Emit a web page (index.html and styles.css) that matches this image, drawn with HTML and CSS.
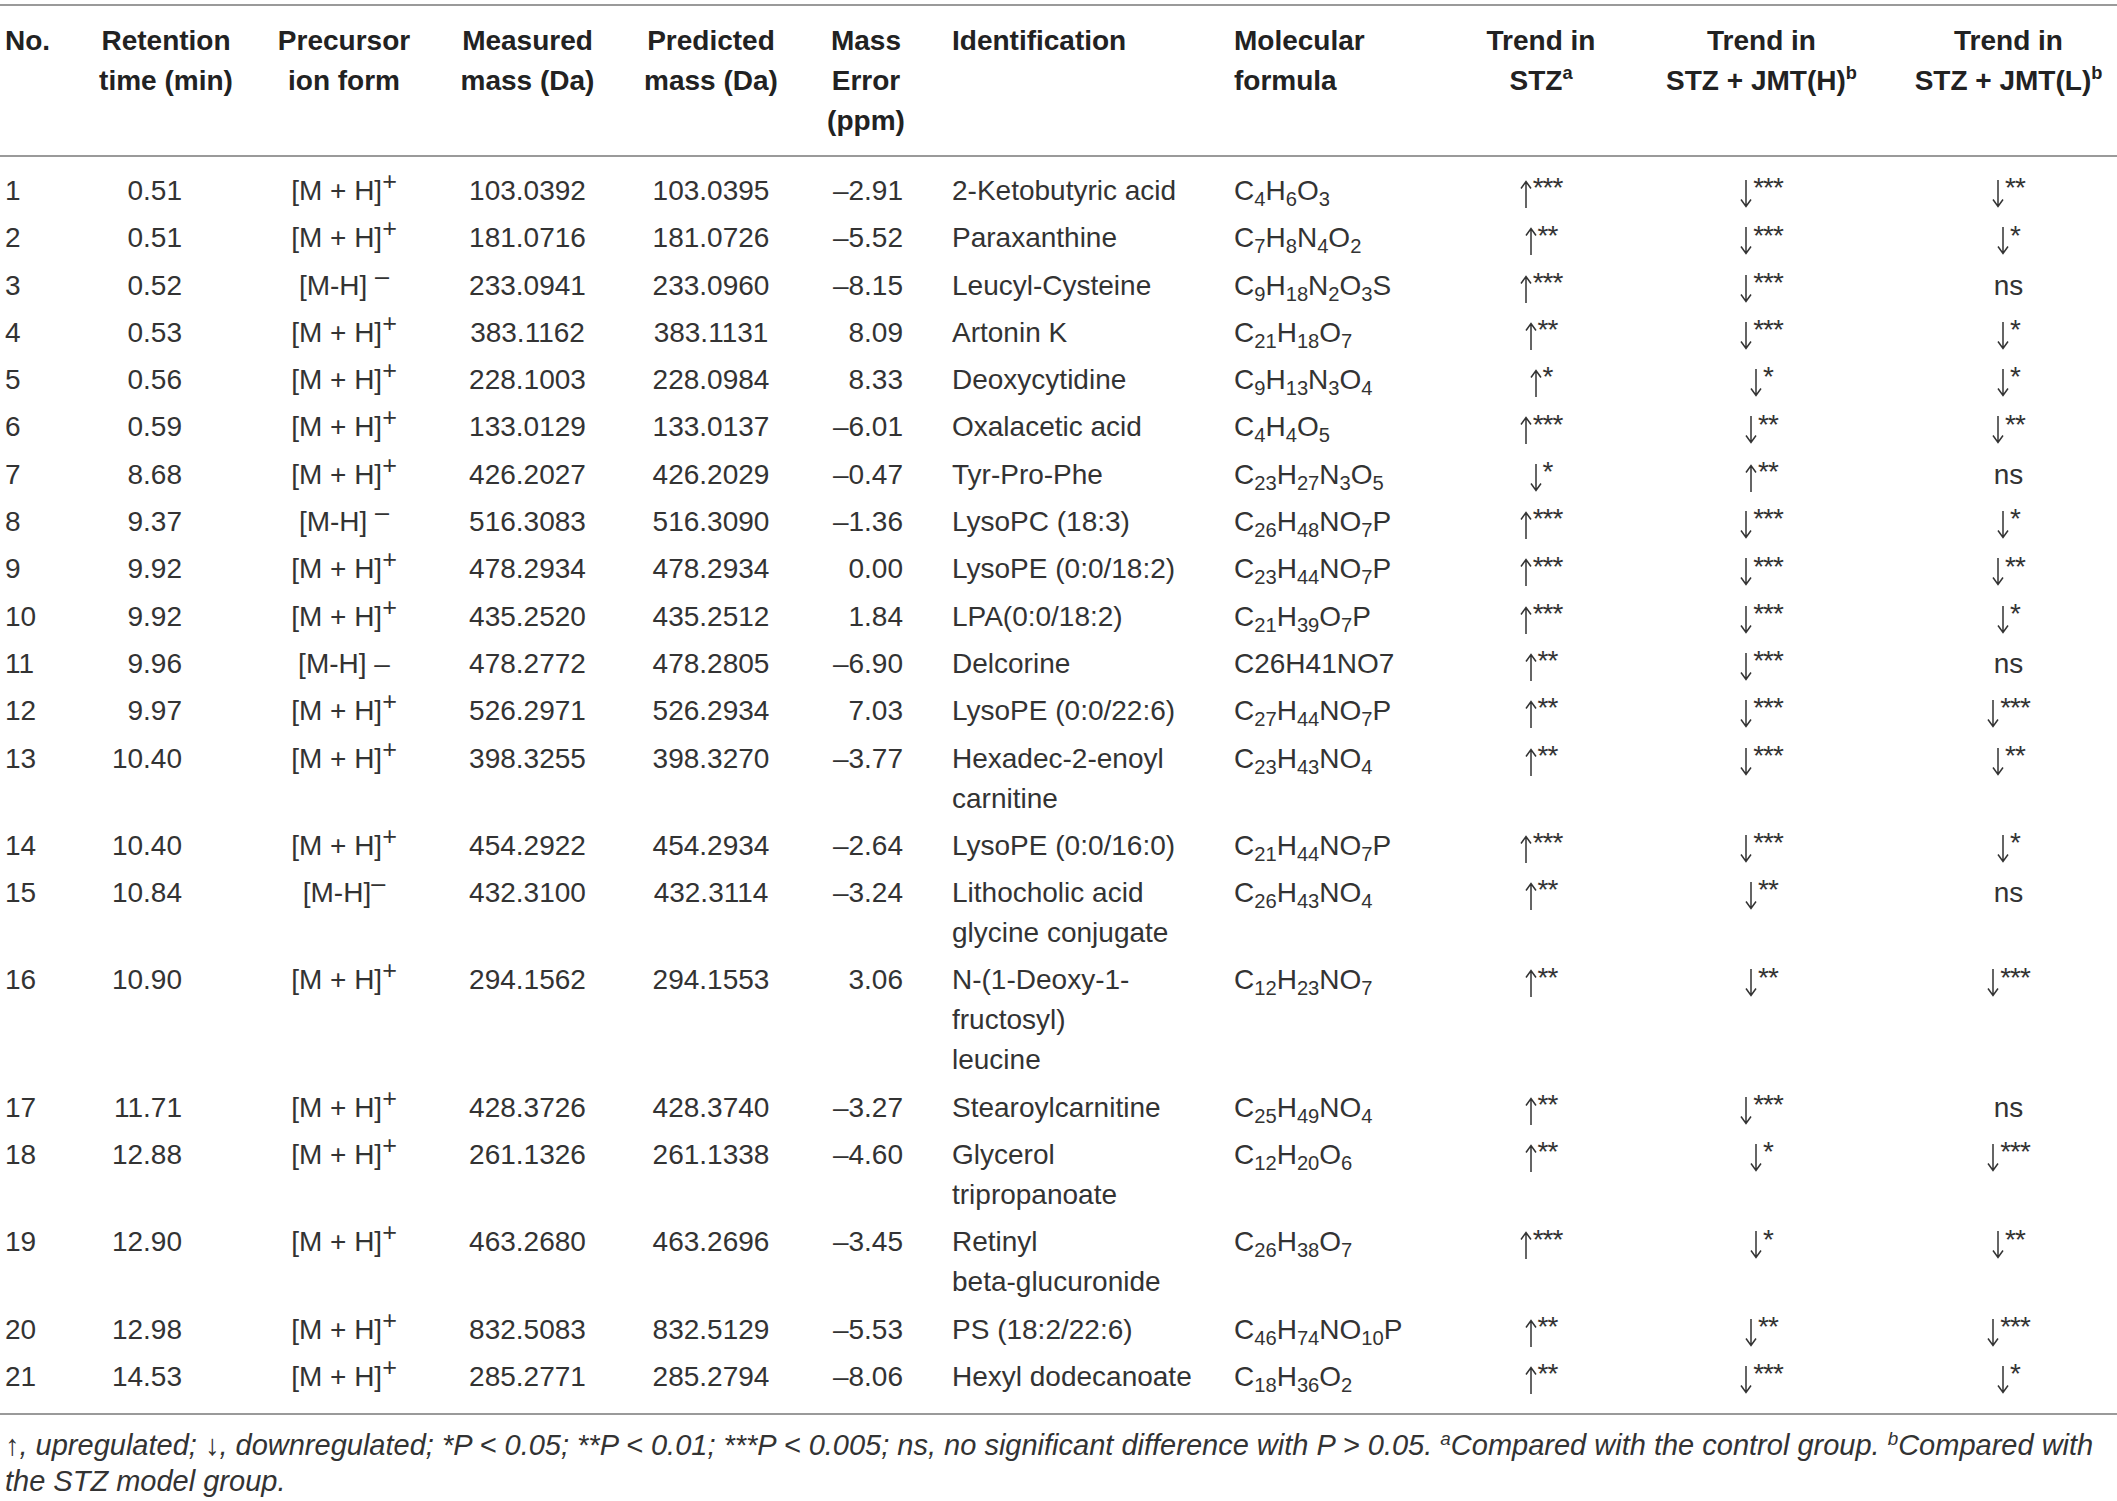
FILE: index.html
```html
<!DOCTYPE html>
<html lang="en">
<head>
    <meta charset="UTF-8">
    <title>Table - Identified metabolites</title>
    <link rel="stylesheet" href="styles.css">
</head>
<body>
<!-- flechas reutilizables -->
<svg class="defs" width="0" height="0" aria-hidden="true">
    <symbol id="up" viewBox="0 0 12 28"><path d="M6 1.5V28M1 8.5L6 1.5L11 8.5" fill="none" stroke="#333" stroke-width="1.5"/></symbol>
    <symbol id="dn" viewBox="0 0 12 28"><path d="M6 0V26.5M1 19.5L6 26.5L11 19.5" fill="none" stroke="#333" stroke-width="1.5"/></symbol>
</svg>
<div class="wrap">
    <table class="metab">
        <colgroup>
            <col style="width:80px"><col style="width:172px"><col style="width:184px"><col style="width:183px">
            <col style="width:184px"><col style="width:126px"><col style="width:281px"><col style="width:235px">
            <col style="width:182px"><col style="width:259px"><col style="width:231px">
        </colgroup>
        <thead>
            <tr>
                <th>No.</th>
                <th>Retention<br>time (min)</th>
                <th>Precursor<br>ion form</th>
                <th>Measured<br>mass (Da)</th>
                <th>Predicted<br>mass (Da)</th>
                <th>Mass<br>Error<br>(ppm)</th>
                <th>Identification</th>
                <th>Molecular<br>formula</th>
                <th>Trend in<br>STZ<sup class="fn">a</sup></th>
                <th>Trend in<br>STZ + JMT(H)<sup class="fn">b</sup></th>
                <th>Trend in<br>STZ + JMT(L)<sup class="fn">b</sup></th>
            </tr>
        </thead>
        <tbody>
            <tr><td>1</td><td>0.51</td><td>[M + H]<sup class="ch">+</sup></td><td>103.0392</td><td>103.0395</td><td>–2.91</td><td>2-Ketobutyric acid</td><td>C<sub>4</sub>H<sub>6</sub>O<sub>3</sub></td><td><svg class="arr"><use href="#up"/></svg><sup class="st">***</sup></td><td><svg class="arr"><use href="#dn"/></svg><sup class="st">***</sup></td><td><svg class="arr"><use href="#dn"/></svg><sup class="st">**</sup></td></tr>
            <tr><td>2</td><td>0.51</td><td>[M + H]<sup class="ch">+</sup></td><td>181.0716</td><td>181.0726</td><td>–5.52</td><td>Paraxanthine</td><td>C<sub>7</sub>H<sub>8</sub>N<sub>4</sub>O<sub>2</sub></td><td><svg class="arr"><use href="#up"/></svg><sup class="st">**</sup></td><td><svg class="arr"><use href="#dn"/></svg><sup class="st">***</sup></td><td><svg class="arr"><use href="#dn"/></svg><sup class="st">*</sup></td></tr>
            <tr><td>3</td><td>0.52</td><td>[M-H] <sup class="ch">–</sup></td><td>233.0941</td><td>233.0960</td><td>–8.15</td><td>Leucyl-Cysteine</td><td>C<sub>9</sub>H<sub>18</sub>N<sub>2</sub>O<sub>3</sub>S</td><td><svg class="arr"><use href="#up"/></svg><sup class="st">***</sup></td><td><svg class="arr"><use href="#dn"/></svg><sup class="st">***</sup></td><td>ns</td></tr>
            <tr><td>4</td><td>0.53</td><td>[M + H]<sup class="ch">+</sup></td><td>383.1162</td><td>383.1131</td><td>8.09</td><td>Artonin K</td><td>C<sub>21</sub>H<sub>18</sub>O<sub>7</sub></td><td><svg class="arr"><use href="#up"/></svg><sup class="st">**</sup></td><td><svg class="arr"><use href="#dn"/></svg><sup class="st">***</sup></td><td><svg class="arr"><use href="#dn"/></svg><sup class="st">*</sup></td></tr>
            <tr><td>5</td><td>0.56</td><td>[M + H]<sup class="ch">+</sup></td><td>228.1003</td><td>228.0984</td><td>8.33</td><td>Deoxycytidine</td><td>C<sub>9</sub>H<sub>13</sub>N<sub>3</sub>O<sub>4</sub></td><td><svg class="arr"><use href="#up"/></svg><sup class="st">*</sup></td><td><svg class="arr"><use href="#dn"/></svg><sup class="st">*</sup></td><td><svg class="arr"><use href="#dn"/></svg><sup class="st">*</sup></td></tr>
            <tr><td>6</td><td>0.59</td><td>[M + H]<sup class="ch">+</sup></td><td>133.0129</td><td>133.0137</td><td>–6.01</td><td>Oxalacetic acid</td><td>C<sub>4</sub>H<sub>4</sub>O<sub>5</sub></td><td><svg class="arr"><use href="#up"/></svg><sup class="st">***</sup></td><td><svg class="arr"><use href="#dn"/></svg><sup class="st">**</sup></td><td><svg class="arr"><use href="#dn"/></svg><sup class="st">**</sup></td></tr>
            <tr><td>7</td><td>8.68</td><td>[M + H]<sup class="ch">+</sup></td><td>426.2027</td><td>426.2029</td><td>–0.47</td><td>Tyr-Pro-Phe</td><td>C<sub>23</sub>H<sub>27</sub>N<sub>3</sub>O<sub>5</sub></td><td><svg class="arr"><use href="#dn"/></svg><sup class="st">*</sup></td><td><svg class="arr"><use href="#up"/></svg><sup class="st">**</sup></td><td>ns</td></tr>
            <tr><td>8</td><td>9.37</td><td>[M-H] <sup class="ch">–</sup></td><td>516.3083</td><td>516.3090</td><td>–1.36</td><td>LysoPC (18:3)</td><td>C<sub>26</sub>H<sub>48</sub>NO<sub>7</sub>P</td><td><svg class="arr"><use href="#up"/></svg><sup class="st">***</sup></td><td><svg class="arr"><use href="#dn"/></svg><sup class="st">***</sup></td><td><svg class="arr"><use href="#dn"/></svg><sup class="st">*</sup></td></tr>
            <tr><td>9</td><td>9.92</td><td>[M + H]<sup class="ch">+</sup></td><td>478.2934</td><td>478.2934</td><td>0.00</td><td>LysoPE (0:0/18:2)</td><td>C<sub>23</sub>H<sub>44</sub>NO<sub>7</sub>P</td><td><svg class="arr"><use href="#up"/></svg><sup class="st">***</sup></td><td><svg class="arr"><use href="#dn"/></svg><sup class="st">***</sup></td><td><svg class="arr"><use href="#dn"/></svg><sup class="st">**</sup></td></tr>
            <tr><td>10</td><td>9.92</td><td>[M + H]<sup class="ch">+</sup></td><td>435.2520</td><td>435.2512</td><td>1.84</td><td>LPA(0:0/18:2)</td><td>C<sub>21</sub>H<sub>39</sub>O<sub>7</sub>P</td><td><svg class="arr"><use href="#up"/></svg><sup class="st">***</sup></td><td><svg class="arr"><use href="#dn"/></svg><sup class="st">***</sup></td><td><svg class="arr"><use href="#dn"/></svg><sup class="st">*</sup></td></tr>
            <tr><td>11</td><td>9.96</td><td>[M-H] –</td><td>478.2772</td><td>478.2805</td><td>–6.90</td><td>Delcorine</td><td>C26H41NO7</td><td><svg class="arr"><use href="#up"/></svg><sup class="st">**</sup></td><td><svg class="arr"><use href="#dn"/></svg><sup class="st">***</sup></td><td>ns</td></tr>
            <tr><td>12</td><td>9.97</td><td>[M + H]<sup class="ch">+</sup></td><td>526.2971</td><td>526.2934</td><td>7.03</td><td>LysoPE (0:0/22:6)</td><td>C<sub>27</sub>H<sub>44</sub>NO<sub>7</sub>P</td><td><svg class="arr"><use href="#up"/></svg><sup class="st">**</sup></td><td><svg class="arr"><use href="#dn"/></svg><sup class="st">***</sup></td><td><svg class="arr"><use href="#dn"/></svg><sup class="st">***</sup></td></tr>
            <tr><td>13</td><td>10.40</td><td>[M + H]<sup class="ch">+</sup></td><td>398.3255</td><td>398.3270</td><td>–3.77</td><td>Hexadec-2-enoyl<br>carnitine</td><td>C<sub>23</sub>H<sub>43</sub>NO<sub>4</sub></td><td><svg class="arr"><use href="#up"/></svg><sup class="st">**</sup></td><td><svg class="arr"><use href="#dn"/></svg><sup class="st">***</sup></td><td><svg class="arr"><use href="#dn"/></svg><sup class="st">**</sup></td></tr>
            <tr><td>14</td><td>10.40</td><td>[M + H]<sup class="ch">+</sup></td><td>454.2922</td><td>454.2934</td><td>–2.64</td><td>LysoPE (0:0/16:0)</td><td>C<sub>21</sub>H<sub>44</sub>NO<sub>7</sub>P</td><td><svg class="arr"><use href="#up"/></svg><sup class="st">***</sup></td><td><svg class="arr"><use href="#dn"/></svg><sup class="st">***</sup></td><td><svg class="arr"><use href="#dn"/></svg><sup class="st">*</sup></td></tr>
            <tr><td>15</td><td>10.84</td><td>[M-H]<sup class="ch">–</sup></td><td>432.3100</td><td>432.3114</td><td>–3.24</td><td>Lithocholic acid<br>glycine conjugate</td><td>C<sub>26</sub>H<sub>43</sub>NO<sub>4</sub></td><td><svg class="arr"><use href="#up"/></svg><sup class="st">**</sup></td><td><svg class="arr"><use href="#dn"/></svg><sup class="st">**</sup></td><td>ns</td></tr>
            <tr><td>16</td><td>10.90</td><td>[M + H]<sup class="ch">+</sup></td><td>294.1562</td><td>294.1553</td><td>3.06</td><td>N-(1-Deoxy-1-<br>fructosyl)<br>leucine</td><td>C<sub>12</sub>H<sub>23</sub>NO<sub>7</sub></td><td><svg class="arr"><use href="#up"/></svg><sup class="st">**</sup></td><td><svg class="arr"><use href="#dn"/></svg><sup class="st">**</sup></td><td><svg class="arr"><use href="#dn"/></svg><sup class="st">***</sup></td></tr>
            <tr><td>17</td><td>11.71</td><td>[M + H]<sup class="ch">+</sup></td><td>428.3726</td><td>428.3740</td><td>–3.27</td><td>Stearoylcarnitine</td><td>C<sub>25</sub>H<sub>49</sub>NO<sub>4</sub></td><td><svg class="arr"><use href="#up"/></svg><sup class="st">**</sup></td><td><svg class="arr"><use href="#dn"/></svg><sup class="st">***</sup></td><td>ns</td></tr>
            <tr><td>18</td><td>12.88</td><td>[M + H]<sup class="ch">+</sup></td><td>261.1326</td><td>261.1338</td><td>–4.60</td><td>Glycerol<br>tripropanoate</td><td>C<sub>12</sub>H<sub>20</sub>O<sub>6</sub></td><td><svg class="arr"><use href="#up"/></svg><sup class="st">**</sup></td><td><svg class="arr"><use href="#dn"/></svg><sup class="st">*</sup></td><td><svg class="arr"><use href="#dn"/></svg><sup class="st">***</sup></td></tr>
            <tr><td>19</td><td>12.90</td><td>[M + H]<sup class="ch">+</sup></td><td>463.2680</td><td>463.2696</td><td>–3.45</td><td>Retinyl<br>beta-glucuronide</td><td>C<sub>26</sub>H<sub>38</sub>O<sub>7</sub></td><td><svg class="arr"><use href="#up"/></svg><sup class="st">***</sup></td><td><svg class="arr"><use href="#dn"/></svg><sup class="st">*</sup></td><td><svg class="arr"><use href="#dn"/></svg><sup class="st">**</sup></td></tr>
            <tr><td>20</td><td>12.98</td><td>[M + H]<sup class="ch">+</sup></td><td>832.5083</td><td>832.5129</td><td>–5.53</td><td>PS (18:2/22:6)</td><td>C<sub>46</sub>H<sub>74</sub>NO<sub>10</sub>P</td><td><svg class="arr"><use href="#up"/></svg><sup class="st">**</sup></td><td><svg class="arr"><use href="#dn"/></svg><sup class="st">**</sup></td><td><svg class="arr"><use href="#dn"/></svg><sup class="st">***</sup></td></tr>
            <tr><td>21</td><td>14.53</td><td>[M + H]<sup class="ch">+</sup></td><td>285.2771</td><td>285.2794</td><td>–8.06</td><td>Hexyl dodecanoate</td><td>C<sub>18</sub>H<sub>36</sub>O<sub>2</sub></td><td><svg class="arr"><use href="#up"/></svg><sup class="st">**</sup></td><td><svg class="arr"><use href="#dn"/></svg><sup class="st">***</sup></td><td><svg class="arr"><use href="#dn"/></svg><sup class="st">*</sup></td></tr>
        </tbody>
    </table>

    <!-- Notas al pie -->
    <p class="note">↑, upregulated; ↓, downregulated; *P &lt; 0.05; **P &lt; 0.01; ***P &lt; 0.005; ns, no significant difference with P &gt; 0.05. <sup>a</sup>Compared with the control group. <sup>b</sup>Compared with<br>the STZ model group.</p>
</div>
</body>
</html>
```

FILE: styles.css
```css
body {
    margin: 0;
    background-color: #FFFFFF;
    font-family: "Liberation Sans", Arial, sans-serif;
    font-size: 28px;
    color: #333333;
}
.defs {
    position: absolute;
}
.wrap {
    padding-top: 4px;
}
.metab {
    width: 2117px;
    border-collapse: collapse;
    table-layout: fixed;
}
.metab th {
    font-weight: bold;
    color: #222222;
    line-height: 40px;
    padding: 15px 0 14px;
    vertical-align: top;
    text-align: center;
    white-space: nowrap;
    border-top: 2px solid #9a9a9a;
    border-bottom: 2px solid #9a9a9a;
}
.metab td {
    line-height: 40px;
    padding: 4px 0 3.3px;
    vertical-align: top;
    text-align: center;
    white-space: nowrap;
}
.metab tbody tr:first-child td {
    padding-top: 14px;
}
.metab tbody tr:last-child td {
    padding-bottom: 16px;
    border-bottom: 2px solid #9a9a9a;
}

/* columnas */
.metab th:nth-child(1),
.metab td:nth-child(1) { text-align: left; padding-left: 5px; }
.metab td:nth-child(2) { text-align: right; padding-right: 70px; }
.metab td:nth-child(6) { text-align: right; padding-right: 26px; }
.metab th:nth-child(7),
.metab td:nth-child(7) { text-align: left; padding-left: 23px; }
.metab th:nth-child(8),
.metab td:nth-child(8) { text-align: left; padding-left: 24px; }
.metab th:nth-child(9),
.metab td:nth-child(9) { padding-left: 10px; }
.metab th:nth-child(10),
.metab td:nth-child(10) { padding-left: 10px; }
.metab th:nth-child(11),
.metab td:nth-child(11) { padding-left: 14px; }

/* sub y superindices */
.metab sub {
    font-size: 0.72em;
    line-height: 0;
    vertical-align: -0.3em;
}
.metab sup {
    line-height: 0;
}
.ch {
    font-size: 0.9em;
    vertical-align: 0.4em;
}
.arr {
    width: 12px;
    height: 28px;
    vertical-align: -8px;
}
.st {
    font-size: 1em;
    vertical-align: 0.1em;
    letter-spacing: -1px;
    margin-left: 1px;
}
.fn {
    font-size: 0.65em;
    vertical-align: 0.6em;
}

.note {
    margin: 12px 0 0;
    padding-left: 5px;
    font-size: 29px;
    font-style: italic;
    line-height: 36px;
    white-space: nowrap;
    color: #333333;
}
.note sup {
    font-size: 0.65em;
    line-height: 0;
    vertical-align: 0.55em;
}
```
